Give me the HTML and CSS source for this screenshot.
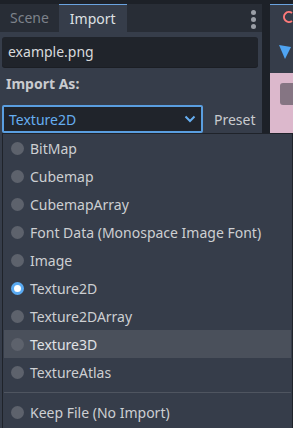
FILE: index.html
```html
<!DOCTYPE html>
<html lang="en">
<head>
  <meta charset="UTF-8">
  <title>Import dock</title>
  <link rel="stylesheet" href="styles.css">
</head>
<body>

<div class="dock">
  <div class="panel">
    <div class="tabs">
      <div class="tab">Scene</div>
      <div class="tab active">Import</div>
      <div class="tab-fill">
        <span class="dots"><i></i><i></i><i></i></span>
      </div>
    </div>
    <div class="content">
      <div class="field">example.png</div>
      <div class="label">Import As:</div>
      <div class="row">
        <div class="select">
          <span>Texture2D</span>
          <svg width="12" height="8" viewBox="0 0 12 8"><path d="M1.5 1.5 L6 6 L10.5 1.5" fill="none" stroke="#66aef0" stroke-width="2"/></svg>
        </div>
        <div class="preset">Preset</div>
      </div>
    </div>
  </div>

  <div class="side">
    <div class="side-top">
      <svg width="10" height="14" viewBox="0 0 10 14"><path d="M9 3 A5 5 0 1 0 9 11" fill="none" stroke="#ff7a7a" stroke-width="2"/></svg>
      <svg class="tri" width="12" height="14" viewBox="0 0 12 14"><path d="M0 0 L12 2 L6 14 Z" fill="#4fa4f2"/></svg>
    </div>
    <div class="side-pink"><div class="pill"></div></div>
  </div>
</div>

<!-- menu del selector abierto -->
<div class="popup">
  <div class="item"><span class="radio"></span>BitMap</div>
  <div class="item"><span class="radio"></span>Cubemap</div>
  <div class="item"><span class="radio"></span>CubemapArray</div>
  <div class="item"><span class="radio"></span>Font Data (Monospace Image Font)</div>
  <div class="item"><span class="radio"></span>Image</div>
  <div class="item"><span class="radio on"></span>Texture2D</div>
  <div class="item"><span class="radio"></span>Texture2DArray</div>
  <div class="item hover"><span class="radio"></span>Texture3D</div>
  <div class="item"><span class="radio"></span>TextureAtlas</div>
  <div class="sep"></div>
  <div class="item"><span class="radio"></span>Keep File (No Import)</div>
</div>

</body>
</html>
```

FILE: styles.css
```css
body {
  margin: 0;
  width: 293px;
  height: 428px;
  overflow: hidden;
  background-color: #1d2128;
  font-family: "Noto Sans", sans-serif;
  font-size: 14px;
  color: #cdcfd2;
  position: relative;
}

.dock {
  display: flex;
  gap: 8px;
  padding-top: 4px;
  height: 424px;
}

.panel {
  width: 266px;
  display: flex;
  flex-direction: column;
}

/* pestañas */
.tabs {
  display: flex;
  height: 28px;
}

.tab {
  padding: 0 10px;
  line-height: 28px;
  background-color: #282d36;
  color: #7d828b;
}

.tab.active {
  background-color: #363d4a;
  color: #dfe1e4;
  border-top: 1px solid #6aa3e0;
  line-height: 27px;
  padding: 0 11px;
}

.tab-fill {
  flex: 1;
  background-color: #282d36;
  display: flex;
  justify-content: flex-end;
  padding: 6px 6px 0 0;
}

.dots {
  display: flex;
  flex-direction: column;
  gap: 2px;
}

.dots i {
  width: 5px;
  height: 5px;
  border-radius: 50%;
  background-color: #9a9ea6;
}

.content {
  flex: 1;
  background-color: #363d4a;
  padding: 5px 4px 0 2px;
}

.field {
  height: 30px;
  line-height: 29px;
  background-color: #20242b;
  border-radius: 3px;
  padding: 0 6px;
  color: #d8dadd;
  box-shadow: 0 1px 0 #1b1e24;
}

.label {
  font-weight: bold;
  padding: 7px 4px 0;
  height: 31px;
  line-height: 20px;
  color: #c9cbcf;
}

.row {
  display: flex;
  align-items: center;
}

.select {
  width: 187px;
  height: 24px;
  border: 2px solid #5a9ee0;
  border-radius: 2px;
  background-color: #20242b;
  display: flex;
  align-items: center;
  justify-content: space-between;
  padding: 0 5px 0 5px;
  color: #66aef0;
}

.preset {
  margin-left: 11px;
  color: #c9cbcf;
}

/* panel derecho */
.side {
  flex: 1;
  display: flex;
  flex-direction: column;
}

.side-top {
  height: 63px;
  background-color: #363d4a;
  border-top: 1px solid #6aa3e0;
  display: flex;
  flex-direction: column;
  padding: 5px 0 0 13px;
  gap: 21px;
}

.side-top .tri {
  margin-left: -4px;
}

.side-pink {
  flex: 1;
  background-color: #dcb8cc;
  padding: 10px 0 0 10px;
}

.pill {
  height: 22px;
  background-color: #857583;
  border-radius: 3px 0 0 3px;
}

/* menu */
.popup {
  position: absolute;
  left: 2px;
  top: 133px;
  width: 287px;
  height: 300px;
  background-color: #363d4a;
  border: 1px solid #1f232a;
  padding: 0 1px;
}

.item {
  height: 28px;
  display: flex;
  align-items: center;
  gap: 6px;
  padding-left: 7px;
  color: #cdcfd2;
}

.item.hover {
  background-color: #4a505b;
  color: #e0e2e5;
}

.radio {
  width: 13px;
  height: 13px;
  border-radius: 50%;
  background-color: #5d626c;
  flex-shrink: 0;
}

.radio.on {
  background-color: #ffffff;
  border: 3px solid #5aaaf2;
  width: 7px;
  height: 7px;
}

.sep {
  height: 1px;
  background-color: #4f5560;
  margin: 6px 0 5px;
}
```
